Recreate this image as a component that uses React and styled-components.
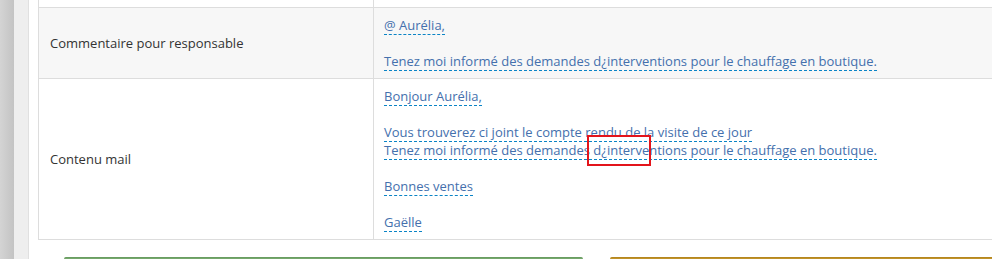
import React from "react";
import styled, { createGlobalStyle } from "styled-components";

const GlobalStyle = createGlobalStyle`
  html, body { margin: 0; padding: 0; background: #fff; }
  body { font-family: "Open Sans", "Liberation Sans", sans-serif; font-size: 13px; color: #333; }
`;

const Page = styled.div`
  position: relative;
  display: flex;
  width: 992px;
  height: 259px;
  overflow: hidden;
`;

const SideShade = styled.div`
  flex: 0 0 14px;
  background: linear-gradient(to right, #d4d4d4, #c3c3c3);
`;

const SideRail = styled.div`
  flex: 0 0 14px;
  background: #eeeeee;
  border-right: 1px solid #e0e0e0;
`;

const Main = styled.div`
  flex: 1 1 auto;
  min-width: 0;
  padding-left: 9px;
`;

const Table = styled.table`
  border-collapse: collapse;
  table-layout: fixed;
  width: 1100px;
`;

const Row = styled.tr`
  background: ${(p) => (p.$shaded ? "#f7f7f7" : "#fff")};
`;

const Cell = styled.td`
  border: 1px solid #dddddd;
  padding: ${(p) => (p.$stub ? "0" : "8px 10px")};
  height: ${(p) => (p.$stub ? "7px" : "auto")};
  border-top: ${(p) => (p.$stub ? "none" : "1px solid #dddddd")};
  vertical-align: middle;
  line-height: 18px;
  font-size: 13px;
`;

const Label = styled(Cell)`
  color: #333;
  padding-left: 11px;
`;

const Line = styled.div`
  height: 18px;
  line-height: 18px;
  white-space: nowrap;
`;

const Editable = styled.span`
  color: #4470ad;
  border-bottom: 1px dashed #0a84c6;
`;

const ButtonRow = styled.div`
  display: flex;
  gap: 27px;
  padding-left: 26px;
  margin-top: 17px;
`;

const Button = styled.div`
  flex: 0 0 519px;
  height: 30px;
  border-radius: 2px;
  border-top: 1px solid ${(p) => p.$color};
  background: ${(p) => p.$fill};
`;

const Highlight = styled.div`
  position: absolute;
  left: 587px;
  top: 135px;
  width: 64px;
  height: 31px;
  box-sizing: border-box;
  border: 2px solid #e3141b;
  pointer-events: none;
`;

const Field = ({ lines }) => (
  <div>
    {lines.map((l, i) => (
      <Line key={i}>{l === null ? null : <Editable>{l}</Editable>}</Line>
    ))}
  </div>
);

export default function App() {
  return (
    <>
      <GlobalStyle />
      <Page>
        <SideShade />
        <SideRail />
        <Main>
          <Table>
            <colgroup>
              <col style={{ width: "335px" }} />
              <col />
            </colgroup>
            <tbody>
              <Row>
                <Cell $stub />
                <Cell $stub />
              </Row>
              <Row $shaded>
                <Label>Commentaire pour responsable</Label>
                <Cell>
                  <Field
                    lines={[
                      "@ Aurélia,",
                      null,
                      "Tenez moi informé des demandes d¿interventions pour le chauffage en boutique.",
                    ]}
                  />
                </Cell>
              </Row>
              <Row>
                <Label>Contenu mail</Label>
                <Cell>
                  <Field
                    lines={[
                      "Bonjour Aurélia,",
                      null,
                      "Vous trouverez ci joint le compte rendu de la visite de ce jour",
                      "Tenez moi informé des demandes d¿interventions pour le chauffage en boutique.",
                      null,
                      "Bonnes ventes",
                      null,
                      "Gaëlle",
                    ]}
                  />
                </Cell>
              </Row>
            </tbody>
          </Table>
          <ButtonRow>
            <Button $color="#6a9d62" $fill="#75a86c" />
            <Button $color="#b5871f" $fill="#c0922a" />
          </ButtonRow>
        </Main>
        <Highlight />
      </Page>
    </>
  );
}
